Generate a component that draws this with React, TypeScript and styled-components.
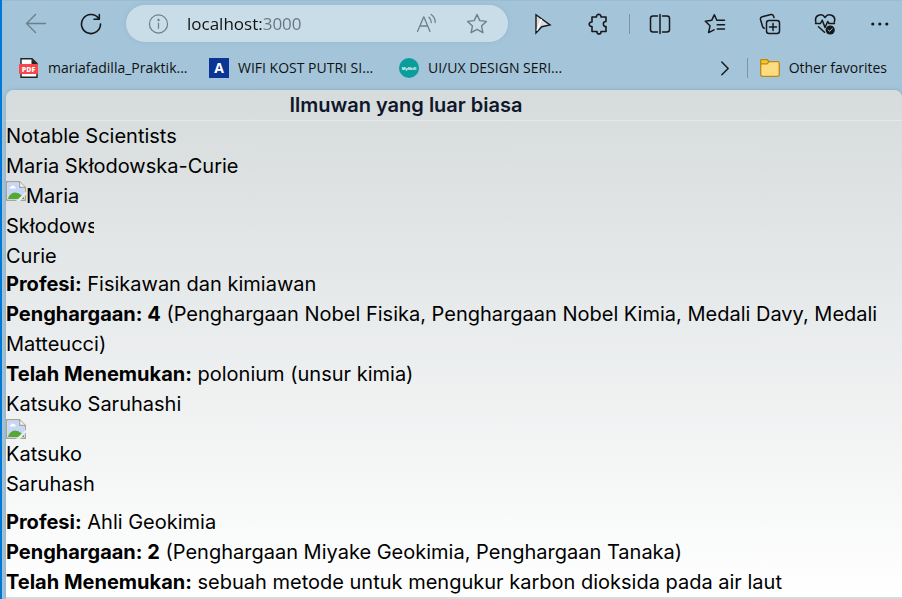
import React from "react";
import styled, { createGlobalStyle } from "styled-components";

const GlobalStyle = createGlobalStyle`
  *, *::before, *::after { box-sizing: border-box; }
  body { margin: 0; background: #a3c4d9; }
  button, input { font: inherit; color: inherit; margin: 0; }
`;

const Window = styled.div`
  min-height: 100vh;
  display: flex;
  flex-direction: column;
  border-left: 2px solid #0078d7;
  background: #a3c4d9;
  color: #111;
  font-family: "Open Sans", "Noto Sans", sans-serif;
`;

const Toolbar = styled.header`
  display: flex;
  align-items: center;
  height: 47px;
  padding: 0 2px 0 14px;
  box-shadow: inset 0 1px 0 #9bbcd1;
`;

const ButtonGroup = styled.div<{ $gap?: number }>`
  display: flex;
  gap: ${(p) => p.$gap ?? 15}px;
`;

const IconButton = styled.button<{ $size?: number; $muted?: boolean }>`
  display: flex;
  flex: none;
  align-items: center;
  justify-content: center;
  width: ${(p) => p.$size ?? 40}px;
  height: 32px;
  padding: 0;
  border: 0;
  background: none;
  color: ${(p) => (p.$muted ? "#6c7f8c" : "#15191c")};
`;

const AddressBar = styled.div`
  flex: 1;
  min-width: 0;
  display: flex;
  align-items: center;
  gap: 18px;
  height: 37px;
  margin: 0 15px;
  padding: 0 20px 0 22px;
  border-radius: 19px;
  background: #c9dde8;
  box-shadow: 0 0 4px #94b6cc;
`;

const UrlInput = styled.input`
  flex: 1;
  min-width: 0;
  height: 24px;
  padding: 0;
  border: 0;
  outline: 0;
  background: linear-gradient(to right, #111 76px, #68757d 76px);
  background-clip: text;
  -webkit-background-clip: text;
  color: transparent;
  caret-color: #111;
  font-size: 17px;
  line-height: 24px;
`;

const AddressActions = styled.div`
  display: flex;
  gap: 28px;
`;

const Divider = styled.span<{ $gap: number }>`
  flex: none;
  width: 1px;
  height: 20px;
  margin: 0 ${(p) => p.$gap}px;
  background: #7896a8;
`;

const FavoritesBar = styled.nav`
  display: flex;
  align-items: center;
  height: 43px;
  padding: 0 15px 1px 17px;
`;

const Favorite = styled.a<{ $width?: number }>`
  display: flex;
  flex: none;
  align-items: center;
  gap: 9px;
  width: ${(p) => (p.$width ? `${p.$width}px` : "auto")};
  color: inherit;
  font-size: 14px;
  line-height: 20px;
  white-space: nowrap;
  text-decoration: none;
`;

const Spacer = styled.span`
  flex: 1;
`;

const Page = styled.main`
  flex: 1;
  margin-left: 4px;
  border-radius: 8px 8px 0 0;
  background: #d6dbdc;
  box-shadow: 0 0 4px #86a9bf;
  color: #000;
  font-family: Inter, sans-serif;
  font-size: 20px;
  line-height: 30px;
`;

const Content = styled.div`
  border-radius: 8px 8px 0 0;
  background: linear-gradient(to bottom, #d6dbdc, #fff);
`;

const TitleBar = styled.div`
  border-bottom: 1px solid #e5e8e9;
`;

const Title = styled.h1`
  max-width: 800px;
  margin: 0;
  font-size: 20px;
  font-weight: 600;
  text-align: center;
  color: #0f172a;
`;

const Heading = styled.h2`
  margin: 0;
  font-size: 20px;
  font-weight: 400;
`;

const Name = styled(Heading).attrs({ as: "h3" })``;

const Portrait = styled.div`
  width: 88px;
  height: 88px;
  overflow: hidden;
  line-height: 0;
`;

const AltText = styled.span`
  line-height: 30px;
`;

const MissingImage = styled.svg`
  width: 20px;
  height: 20px;
  vertical-align: top;
`;

const Facts = styled.ul`
  margin: 0;
  padding: 0;
  list-style: none;
`;

type IconProps = { size?: number; width?: number; children: React.ReactNode };

const Icon = ({ size = 22, width = 1.4, children }: IconProps) => (
  <svg
    width={size}
    height={size}
    viewBox="0 0 22 22"
    fill="none"
    stroke="currentColor"
    strokeWidth={width}
    strokeLinecap="round"
    strokeLinejoin="round"
    aria-hidden="true"
  >
    {children}
  </svg>
);

const BrokenPicture = () => (
  <MissingImage viewBox="0 0 20 20" aria-hidden="true">
    <path d="M.7 .7H13.5L19.3 6.5V19.3H.7Z" fill="#fff" stroke="#a3a3a3" strokeWidth="1.4" />
    <path d="M2 2H12.5V7.5H18V18H2Z" fill="#c5d7f8" />
    <path d="M3.5 7.5Q3.5 5.7 5 5.7Q6 3.6 7.8 5Q9.8 5 9.8 7.5Z" fill="#fff" />
    <path d="M2 18Q3.5 12 9 11.5Q13 11.5 15 14L18 16V18Z" fill="#55a835" />
    <path d="M13.5 .7V6.5H19.3" fill="#f3f3f3" stroke="#a3a3a3" strokeWidth="1.4" />
    <path d="M10 20L20 10.5V13.5L14 20Z" fill="#e8ecee" />
  </MissingImage>
);

type Scientist = {
  name: string;
  profession: string;
  awards: string[];
  discovery: string;
};

const scientists: Scientist[] = [
  {
    name: "Maria Skłodowska-Curie",
    profession: "Fisikawan dan kimiawan",
    awards: ["Penghargaan Nobel Fisika", "Penghargaan Nobel Kimia", "Medali Davy", "Medali Matteucci"],
    discovery: "polonium (unsur kimia)",
  },
  {
    name: "Katsuko Saruhashi",
    profession: "Ahli Geokimia",
    awards: ["Penghargaan Miyake Geokimia", "Penghargaan Tanaka"],
    discovery: "sebuah metode untuk mengukur karbon dioksida pada air laut",
  },
];

const Profile = ({ name, profession, awards, discovery }: Scientist) => (
  <section>
    <Name>{name}</Name>
    <Portrait>
      <BrokenPicture />
      <AltText>{name}</AltText>
    </Portrait>
    <Facts>
      <li>
        <b>Profesi:</b> {profession}
      </li>
      <li>
        <b>{`Penghargaan: ${awards.length}`}</b>
        {` (${awards.join(", ")})`}
      </li>
      <li>
        <b>Telah Menemukan:</b> {discovery}
      </li>
    </Facts>
  </section>
);

export default function App() {
  return (
    <Window>
      <GlobalStyle />
      <Toolbar>
        <ButtonGroup>
          <IconButton $muted aria-label="Back">
            <Icon>
              <path d="M20.5 10.5H1.5M10.5 1.5L1.5 10.5L10.5 19.5" />
            </Icon>
          </IconButton>
          <IconButton aria-label="Refresh">
            <Icon width={1.6}>
              <path d="M20.5 11A9.5 9.5 0 1 1 18.5 5.2M19.3 1.5V6.3H14" />
            </Icon>
          </IconButton>
        </ButtonGroup>
        <AddressBar>
          <IconButton $size={21} $muted aria-label="Site information">
            <Icon width={1.3}>
              <circle cx="11" cy="11" r="9.5" />
              <path d="M11 10V15.5" />
              <circle cx="11" cy="6.8" r=".6" fill="currentColor" />
            </Icon>
          </IconButton>
          <UrlInput aria-label="Address" defaultValue="localhost:3000" />
          <AddressActions>
            <IconButton $size={22} $muted aria-label="Read aloud">
              <Icon width={1.3}>
                <path d="M1.5 18.5L7.8 3.8L14 18.5M3.9 13H11.7" />
                <path d="M13 4.2Q15.2 6.2 15.3 9.5M15.2 1.5Q19.3 4.6 19.2 9.5" />
              </Icon>
            </IconButton>
            <IconButton $size={22} $muted aria-label="Add to favorites">
              <Icon>
                <path d="M11 1.5L13.8 7.6L20.4 8.4L15.5 12.9L16.9 19.7L11 16.4L5.1 19.7L6.5 12.9L1.6 8.4L8.2 7.6Z" />
              </Icon>
            </IconButton>
          </AddressActions>
        </AddressBar>
        <ButtonGroup $gap={16}>
          <IconButton aria-label="Pointer">
            <Icon width={1.4}>
              <path d="M4 1.8L18 12L9.8 13.7L4 20Z" fill="#dcdcdc" strokeLinejoin="miter" />
              <path d="M5.2 17L9.3 6.6" stroke="#fff" />
            </Icon>
          </IconButton>
          <IconButton aria-label="Extensions">
            <Icon width={1.6}>
              <path d="M4 4H8.5C8 .5 13.5 .5 13 4H18V8.5C14.5 8 14.5 14 18 13.5V18.5H13C13.5 21.8 8.5 21.8 9 18.5H4V13.5C.3 14 .3 8.5 4 9Z" />
            </Icon>
          </IconButton>
        </ButtonGroup>
        <Divider $gap={10} />
        <ButtonGroup>
          <IconButton aria-label="Split screen">
            <Icon width={1.5}>
              <path d="M8.5 3H4Q1.5 3 1.5 5.5V16.5Q1.5 19 4 19H8.5M13.5 3H18Q20.5 3 20.5 5.5V16.5Q20.5 19 18 19H13.5M11 1.5V20.5" />
            </Icon>
          </IconButton>
          <IconButton aria-label="Favorites">
            <Icon width={1.5}>
              <path d="M12.8 7.2L10.4 1.7L7.7 7.3L1.3 8.3L6 12.8L4.6 19.6L10 16.8M13.2 7.3H20.5M13.2 11.7H20.5M13.2 16H20.5" />
            </Icon>
          </IconButton>
          <IconButton aria-label="Collections">
            <Icon width={1.5}>
              <rect x="7.5" y="7.5" width="13" height="13" rx="2.5" />
              <path d="M14 10.5V17.5M10.5 14H17.5M15 4.5L14.5 3Q13.8 1 12 1.5L3.2 3.8Q1 4.5 1.5 6.5L3.4 13Q3.8 14.7 5.2 15.2" />
            </Icon>
          </IconButton>
          <IconButton aria-label="Browser essentials">
            <Icon width={1.5}>
              <path d="M1.8 9C0 2 8 -.5 11 4.5C14 -.5 22.5 2 20.3 9M1.5 10.5H6.5L8.3 7.2L11 14.5L13.7 8.5L15 10.5H20.5M4.5 13.8L10.5 19.2" />
              <circle cx="16.2" cy="17" r="4.6" fill="currentColor" stroke="none" />
              <path d="M14.3 17L15.6 18.4L18.2 15.5" stroke="#a3c4d9" strokeWidth="1" />
            </Icon>
          </IconButton>
          <IconButton aria-label="Settings and more">
            <Icon>
              <g fill="currentColor" stroke="none">
                <circle cx="3.8" cy="11" r="1.6" />
                <circle cx="10.8" cy="11" r="1.6" />
                <circle cx="17.8" cy="11" r="1.6" />
              </g>
            </Icon>
          </IconButton>
        </ButtonGroup>
      </Toolbar>
      <FavoritesBar aria-label="Favorites bar">
        <Favorite href="#praktik" $width={190}>
          <svg width="20" height="20" viewBox="0 0 20 20" aria-hidden="true">
            <path d="M2 .7H13L18 5.5V19.3H2Z" fill="#fff" stroke="#222" strokeWidth="1.4" />
            <path d="M12.5 1V6H18Z" fill="#222" />
            <rect x="0" y="6" width="19" height="10" rx="1" fill="#f5474c" />
            <text x="9.5" y="13.8" textAnchor="middle" fontSize="7" fontWeight="800" fill="#fff">
              PDF
            </text>
          </svg>
          mariafadilla_Praktik...
        </Favorite>
        <Favorite href="#wifi" $width={190}>
          <svg width="20" height="20" viewBox="0 0 20 20" aria-hidden="true">
            <rect width="20" height="20" fill="#0a3595" />
            <text x="10" y="15" textAnchor="middle" fontSize="14" fontWeight="700" fill="#fff">
              A
            </text>
          </svg>
          WIFI KOST PUTRI SI...
        </Favorite>
        <Favorite href="#uiux">
          <svg width="20" height="20" viewBox="0 0 20 20" aria-hidden="true">
            <circle cx="10" cy="10" r="10" fill="#0b9c9c" />
            <text x="10" y="12" textAnchor="middle" fontSize="4" fontWeight="700" fill="#fff">
              MySkill
            </text>
          </svg>
          UI/UX DESIGN SERI...
        </Favorite>
        <Spacer />
        <IconButton $size={20} aria-label="More favorites">
          <Icon width={1.6}>
            <path d="M7.5 4.5L14.5 11.5L7.5 18.5" />
          </Icon>
        </IconButton>
        <Divider $gap={12} />
        <Favorite href="#other">
          <svg width="20" height="20" viewBox="0 0 20 20" aria-hidden="true">
            <path d="M.7 3.2Q.7 1.7 2.2 1.7H7L9.2 3.7H17.5Q19.3 3.7 19.3 5.5V16.5Q19.3 18.3 17.5 18.3H2.5Q.7 18.3 .7 16.5Z" fill="#ffdc82" stroke="#b98a14" strokeWidth="1.3" />
            <path d="M.7 3.2Q.7 1.7 2.2 1.7H7L9 3.7L7 5.8H.9Z" fill="#f8c630" stroke="#b98a14" strokeWidth="1.2" />
          </svg>
          Other favorites
        </Favorite>
      </FavoritesBar>
      <Page>
        <Content>
          <TitleBar>
            <Title>Ilmuwan yang luar biasa</Title>
          </TitleBar>
          <Heading>Notable Scientists</Heading>
          {scientists.map((s) => (
            <Profile key={s.name} {...s} />
          ))}
        </Content>
      </Page>
    </Window>
  );
}
